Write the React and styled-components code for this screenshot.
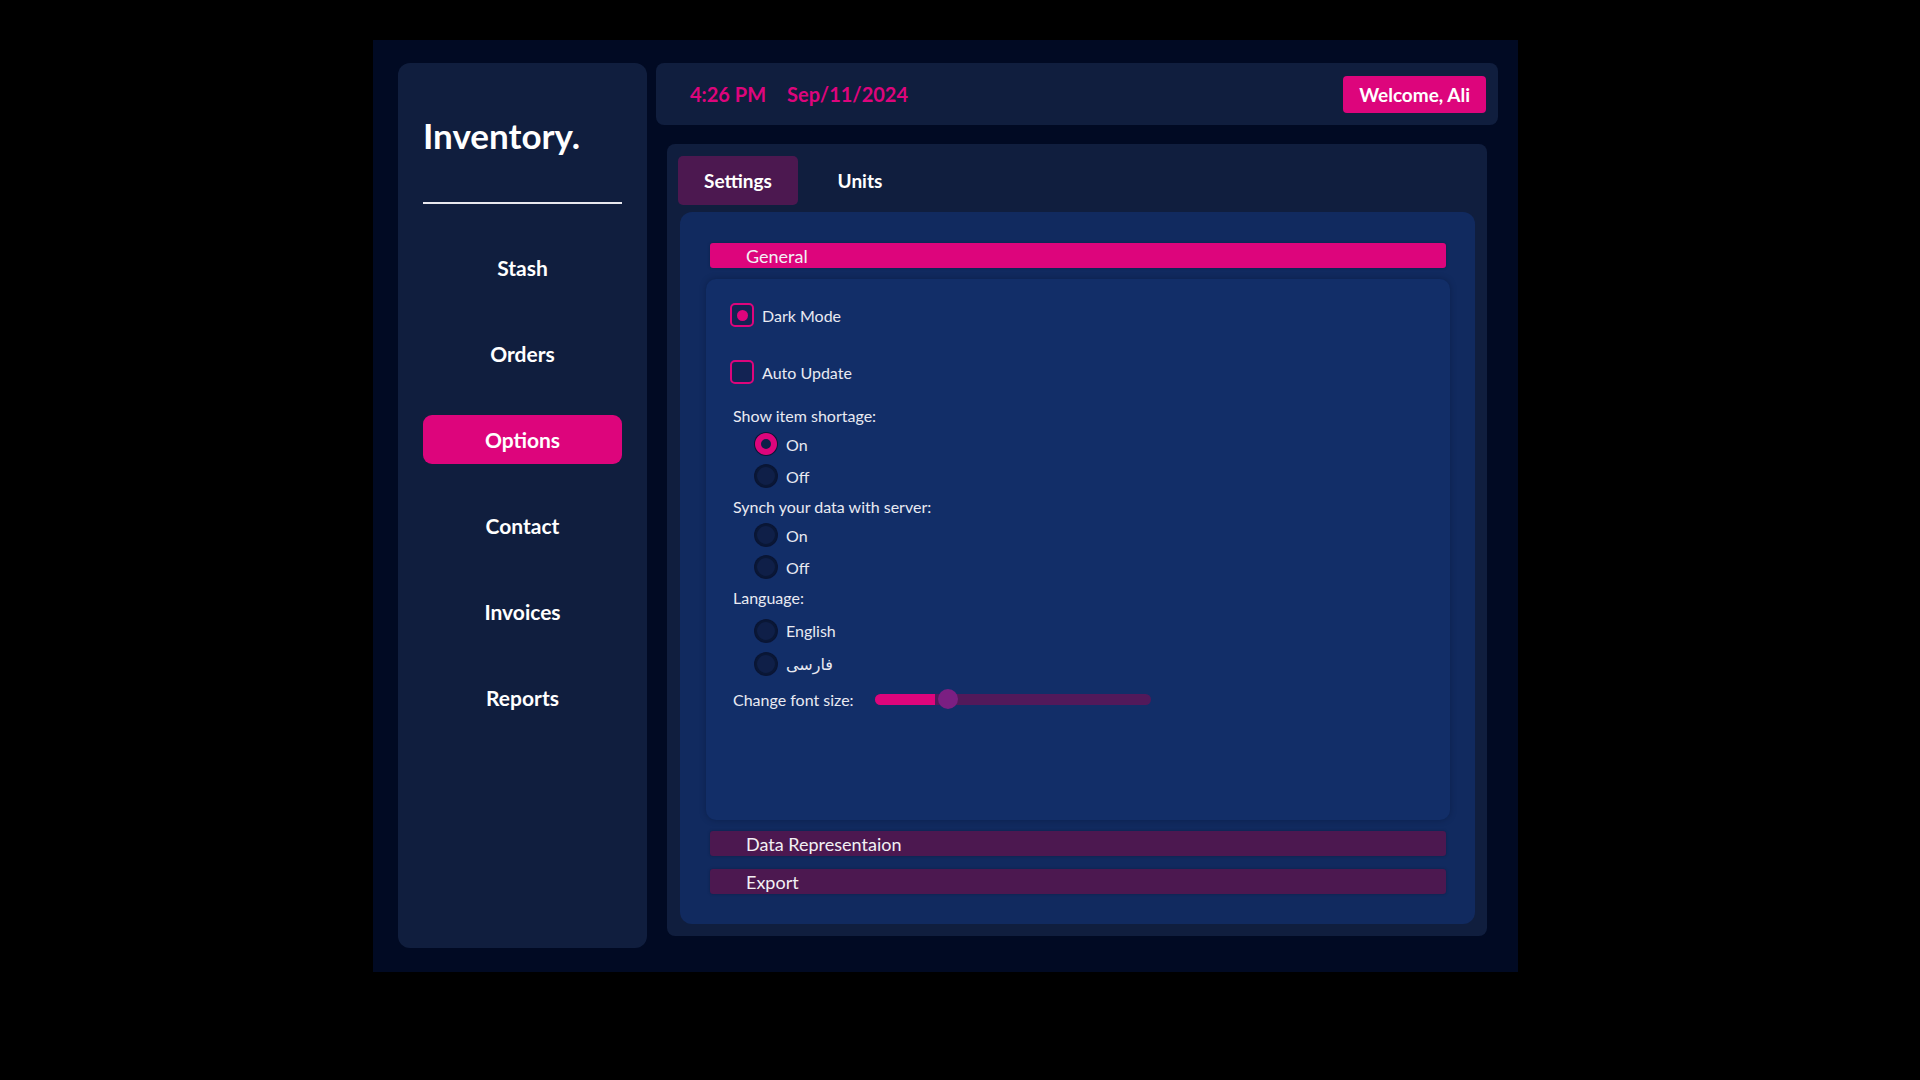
import React from 'react'
import styled, { createGlobalStyle } from 'styled-components'

const GlobalStyle = createGlobalStyle`
body{
    margin:0;
    background:#000;
    font-family: Lato, "DejaVu Sans", sans-serif;
    color:#fff;
}
`

const pink = '#dd057c'
const purple = '#4c1850'

const Page = styled.div`
width:1920px;
height:1080px;
padding:40px 0 0 373px;
box-sizing:border-box;
`
const Shell = styled.div`
width:1145px;
height:932px;
box-sizing:border-box;
background:#010a23;
padding:23px 20px 24px 25px;
display:flex;
gap:9px;
`
const Sidebar = styled.aside`
width:249px;
flex-shrink:0;
background:#101e3e;
border-radius:12px;
padding:51px 25px 0;
box-sizing:border-box;
display:flex;
flex-direction:column;
`
const Brand = styled.h1`
margin:0;
font-size:35px;
font-weight:700;
line-height:42px;
`
const Divider = styled.hr`
margin:46px 0 39px;
border:none;
height:2px;
background:#e8e8ee;
`
const Nav = styled.nav`
display:flex;
flex-direction:column;
gap:37px;
`
const NavItem = styled.a`
height:49px;
display:flex;
align-items:center;
justify-content:center;
border-radius:9px;
font-size:21px;
font-weight:700;
color:#fff;
background:${p => p.active ? pink : 'transparent'};
`
const Right = styled.div`
flex:1;
display:flex;
flex-direction:column;
gap:19px;
`
const Header = styled.header`
height:62px;
background:#101e3e;
border-radius:8px;
display:flex;
align-items:center;
padding:0 12px 0 34px;
`
const Clock = styled.div`
display:flex;
gap:21px;
color:${pink};
font-size:20px;
font-weight:700;
flex:1;
`
const Welcome = styled.button`
height:37px;
padding:0 16px;
border:none;
border-radius:4px;
background:${pink};
color:#fff;
font-family:inherit;
font-size:19px;
font-weight:700;
`
const Panel = styled.main`
margin:0 11px;
height:792px;
background:#101e3e;
border-radius:8px;
padding:12px 12px 12px 11px;
box-sizing:border-box;
display:flex;
flex-direction:column;
gap:7px;
`
const Tabs = styled.div`
display:flex;
`
const Tab = styled.div`
width:${p => p.w || 120}px;
height:49px;
display:flex;
align-items:center;
justify-content:center;
border-radius:5px;
font-size:19px;
font-weight:700;
background:${p => p.active ? purple : 'transparent'};
`
const Inner = styled.section`
flex:1;
margin-left:2px;
background:#112a5f;
border-radius:12px;
padding:31px 25px 30px 26px;
display:flex;
flex-direction:column;
`
const SectionBar = styled.div`
height:25px;
margin:0 4px ${p => p.gap || 0}px;
background:${p => p.open ? pink : purple};
border-radius:3px;
padding-left:36px;
display:flex;
align-items:center;
font-size:18px;
color:#f2f0f4;
box-shadow:0 0 3px rgba(0,0,0,0.25);
`
const Content = styled.div`
height:541px;
margin:11px 0;
background:#122e68;
border-radius:10px;
box-shadow:0 0 6px rgba(5,15,40,0.35);
padding:24px 24px 0;
box-sizing:border-box;
color:#e9eaf2;
font-size:16px;
`
const CheckRow = styled.label`
display:flex;
align-items:center;
gap:8px;
height:24px;
margin-bottom:${p => p.mb || 0}px;
`
const Box = styled.span`
width:24px;
height:24px;
box-sizing:border-box;
border:2px solid ${pink};
border-radius:5px;
background:#132353;
display:flex;
align-items:center;
justify-content:center;
&::after{
    content:'';
    display:${p => p.checked ? 'block' : 'none'};
    width:11px;
    height:11px;
    border-radius:50%;
    background:${pink};
}
`
const GroupLabel = styled.div`
line-height:20px;
margin:${p => p.mt || 0}px 0 0 3px;
`
const RadioList = styled.div`
display:flex;
flex-direction:column;
padding-left:25px;
margin-top:${p => p.mt || 2}px;
`
const RadioRow = styled.label`
display:flex;
align-items:center;
gap:9px;
height:${p => p.h || 32}px;
`
const Dot = styled.span`
width:22px;
height:22px;
box-sizing:border-box;
border-radius:50%;
border:${p => p.checked ? `6px solid ${pink}` : '2px solid #0a1736'};
background:#0f1f48;
box-shadow:0 0 0 1px #0a1534;
`
const SliderRow = styled.div`
display:flex;
align-items:center;
gap:21px;
height:20px;
margin:9px 0 0 3px;
`
const Track = styled.div`
position:relative;
width:276px;
height:11px;
border-radius:6px;
background:#52195a;
`
const Fill = styled.div`
height:100%;
border-radius:6px 0 0 6px;
background:${pink};
`
const Thumb = styled.span`
position:absolute;
top:50%;
width:20px;
height:20px;
margin:-10px 0 0 -10px;
border-radius:50%;
background:#7b1f82;
`

const radioGroups = [
    { label: 'Show item shortage:', options: ['On', 'Off'], selected: 0, mt: 22 },
    { label: 'Synch your data with server:', options: ['On', 'Off'], selected: -1, mt: 5 },
    { label: 'Language:', options: ['English', 'فارسی'], selected: -1, mt: 5, listMt: 6, h: 33 },
]

function App() {
    const fontValue = 0.22
    return (
        <Page>
            <GlobalStyle />
            <Shell>
                <Sidebar>
                    <Brand>Inventory.</Brand>
                    <Divider />
                    <Nav>
                        {['Stash', 'Orders', 'Options', 'Contact', 'Invoices', 'Reports'].map(item => (
                            <NavItem key={item} active={item === 'Options'}>{item}</NavItem>
                        ))}
                    </Nav>
                </Sidebar>
                <Right>
                    <Header>
                        <Clock><span>4:26 PM</span><span>Sep/11/2024</span></Clock>
                        <Welcome>Welcome, Ali</Welcome>
                    </Header>
                    <Panel>
                        <Tabs>
                            <Tab active>Settings</Tab>
                            <Tab w={124}>Units</Tab>
                        </Tabs>
                        <Inner>
                            <SectionBar open>General</SectionBar>
                            <Content>
                                <CheckRow mb={33}><Box checked />Dark Mode</CheckRow>
                                <CheckRow><Box />Auto Update</CheckRow>
                                {radioGroups.map(group => (
                                    <React.Fragment key={group.label}>
                                        <GroupLabel mt={group.mt}>{group.label}</GroupLabel>
                                        <RadioList mt={group.listMt}>
                                            {group.options.map((opt, i) => (
                                                <RadioRow key={opt} h={group.h}>
                                                    <Dot checked={i === group.selected} />{opt}
                                                </RadioRow>
                                            ))}
                                        </RadioList>
                                    </React.Fragment>
                                ))}
                                <SliderRow>
                                    <span>Change font size:</span>
                                    <Track>
                                        <Fill style={{ width: `${fontValue * 100}%` }} />
                                        <Thumb style={{ left: `${fontValue * 100 + 4.5}%` }} />
                                    </Track>
                                </SliderRow>
                            </Content>
                            <SectionBar gap={13}>Data Representaion</SectionBar>
                            <SectionBar>Export</SectionBar>
                        </Inner>
                    </Panel>
                </Right>
            </Shell>
        </Page>
    )
}

export default App
